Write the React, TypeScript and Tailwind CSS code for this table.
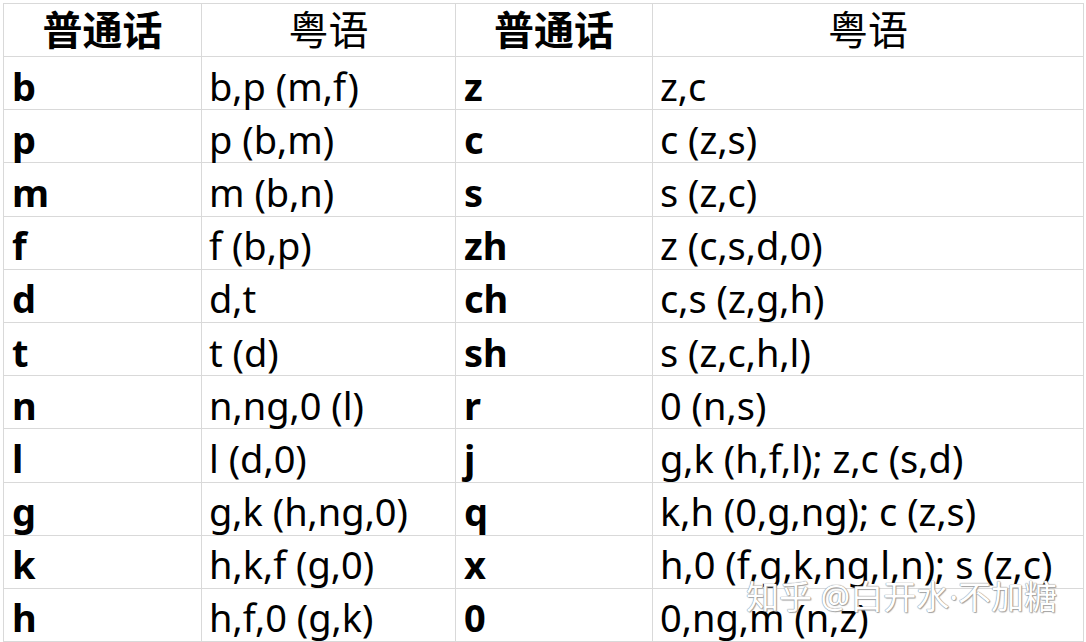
import React from 'react';

const rows: [string, string, string, string][] = [
  ['b', 'b,p (m,f)', 'z', 'z,c'],
  ['p', 'p (b,m)', 'c', 'c (z,s)'],
  ['m', 'm (b,n)', 's', 's (z,c)'],
  ['f', 'f (b,p)', 'zh', 'z (c,s,d,0)'],
  ['d', 'd,t', 'ch', 'c,s (z,g,h)'],
  ['t', 't (d)', 'sh', 's (z,c,h,l)'],
  ['n', 'n,ng,0 (l)', 'r', '0 (n,s)'],
  ['l', 'l (d,0)', 'j', 'g,k (h,f,l); z,c (s,d)'],
  ['g', 'g,k (h,ng,0)', 'q', 'k,h (0,g,ng); c (z,s)'],
  ['k', 'h,k,f (g,0)', 'x', 'h,0 (f,g,k,ng,l,n); s (z,c)'],
  ['h', 'h,f,0 (g,k)', '0', '0,ng,m (n,z)'],
];

const font = { fontFamily: '"Noto Sans", "Noto Sans CJK SC", sans-serif' };
const cols = 'grid grid-cols-[198px_254px_197px_431px]';

export default function App() {
  return (
    <div className="w-[1086px] h-[642px] bg-white relative overflow-hidden text-black" style={font}>
      <div className="ml-[3px] mt-[3px] w-[1081px] border-l border-t border-[#d9d9d9]">
        {/* Header */}
        <div className={`${cols} h-[53px]`}>
          {['普通话', '粤语', '普通话', '粤语'].map((h, i) => (
            <div
              key={i}
              className={`border-r border-b border-[#d9d9d9] flex items-center justify-center text-[40px] leading-none ${i % 2 === 0 ? 'font-bold' : 'font-normal'}`}
            >
              {h}
            </div>
          ))}
        </div>
        {rows.map((r, ri) => (
          <div key={ri} className={`${cols} h-[53.2px]`}>
            {r.map((c, ci) => (
              <div
                key={ci}
                className={`border-r border-b border-[#d9d9d9] flex items-center pt-[5px] text-[38px] leading-none whitespace-nowrap ${ci % 2 === 0 ? 'font-bold pl-[8px]' : 'font-normal pl-[7px]'}`}
              >
                {c}
              </div>
            ))}
          </div>
        ))}
      </div>

      {/* Watermark */}
      <div
        className="absolute left-[746px] top-[580px] text-[33px] leading-none text-white whitespace-nowrap"
        style={{ textShadow: '0 0 1px #888, 0 0 1px #888, 1px 1px 1px #aaa' }}
      >
        知乎 @白开水·不加糖
      </div>
    </div>
  );
}
